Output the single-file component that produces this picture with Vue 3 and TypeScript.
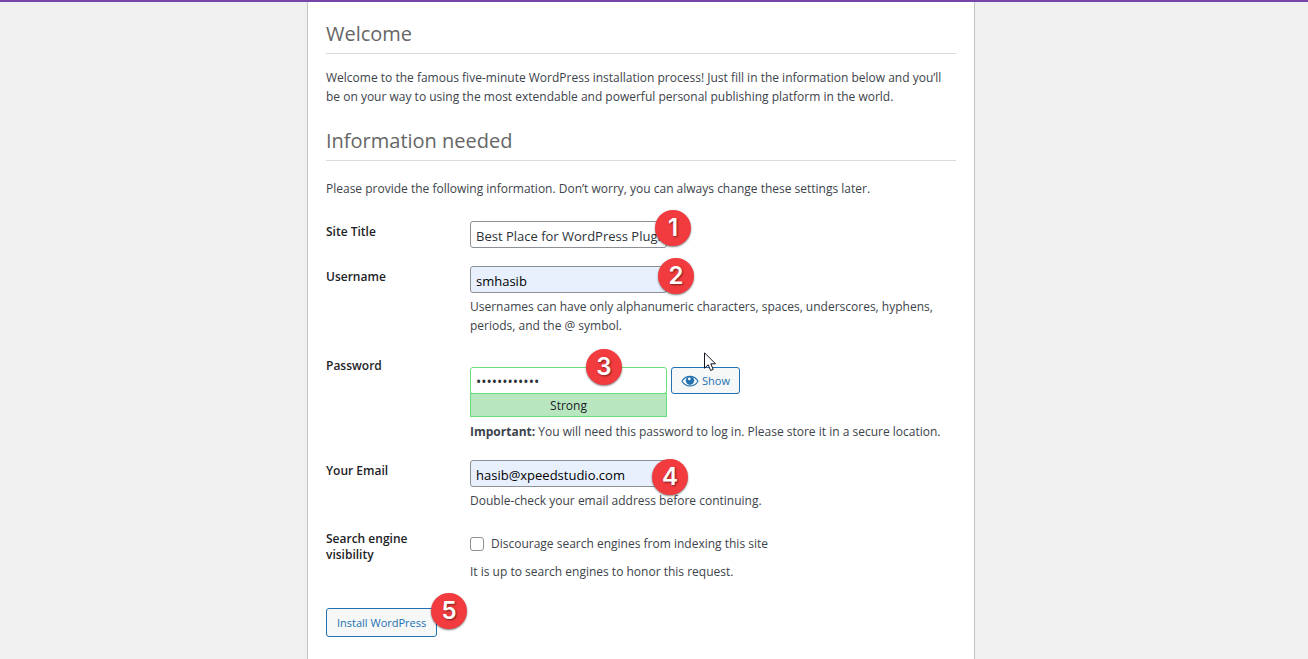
<script setup lang="ts">
import { ref } from 'vue'

const siteTitle = ref('Best Place for WordPress Plugins')
const username = ref('smhasib')
const password = ref('abcdefghijkl')
const email = ref('hasib@xpeedstudio.com')
const discourage = ref(false)
</script>

<template>
  <div class="page">
    <main class="card">
      <h1>Welcome</h1>
      <p class="intro">
        Welcome to the famous five-minute WordPress installation process! Just fill in the information below and you’ll
        be on your way to using the most extendable and powerful personal publishing platform in the world.
      </p>
      <h2>Information needed</h2>
      <p class="intro">
        Please provide the following information. Don’t worry, you can always change these settings later.
      </p>

      <form @submit.prevent>
        <div class="row title-row">
          <label class="name" for="site-title">Site Title</label>
          <div class="cell">
            <input id="site-title" v-model="siteTitle" class="field" type="text" />
            <span class="badge b1">1</span>
          </div>
        </div>

        <div class="row user-row">
          <label class="name" for="username">Username</label>
          <div class="cell">
            <input id="username" v-model="username" class="field filled" type="text" />
            <p class="hint">
              Usernames can have only alphanumeric characters, spaces, underscores, hyphens, periods, and the @ symbol.
            </p>
            <span class="badge b2">2</span>
          </div>
        </div>

        <div class="row pass-row">
          <label class="name" for="password">Password</label>
          <div class="cell pass-cell">
            <div class="pass-line">
              <div class="pass-box">
                <input id="password" v-model="password" class="field strong-field" type="password" />
                <div class="meter">Strong</div>
              </div>
              <button type="button" class="btn show">
                <svg class="eye" viewBox="0 0 18 12" aria-hidden="true">
                  <path
                    d="M1 6.200C2.800 3.200 5.600 1.400 9 1.400S15.200 3.200 17 6.200C15.200 9.200 12.400 10.900 9 10.900S2.800 9.200 1 6.200Z"
                    fill="none"
                    stroke="currentColor"
                    stroke-width="1.100"
                  />
                  <circle cx="9" cy="5.600" r="4.200" fill="currentColor" />
                  <circle cx="8.300" cy="3.900" r="1.400" fill="#f6f7f7" />
                </svg>
                Show
              </button>
            </div>
            <p class="hint"><strong>Important:</strong> You will need this password to log in. Please store it in a secure location.</p>
            <span class="badge b3">3</span>
            <svg class="cursor" viewBox="0 0 12 20" aria-hidden="true">
              <path
                d="M0.5 0.8V16.200L4.200 12.800L6.600 18.500L9.200 17.400L6.800 11.800H11.500Z"
                fill="#fff"
                stroke="#15151f"
                stroke-width="1"
              />
            </svg>
          </div>
        </div>

        <div class="row mail-row">
          <label class="name" for="email">Your Email</label>
          <div class="cell">
            <input id="email" v-model="email" class="field filled" type="email" />
            <p class="hint">Double-check your email address before continuing.</p>
            <span class="badge b4">4</span>
          </div>
        </div>

        <div class="row search-row">
          <span class="name two">Search engine visibility</span>
          <div class="cell">
            <label class="check" for="discourage">
              <input id="discourage" v-model="discourage" type="checkbox" />
              Discourage search engines from indexing this site
            </label>
            <p class="honor">It is up to search engines to honor this request.</p>
          </div>
        </div>

        <div class="submit">
          <button type="submit" class="btn install">Install WordPress</button>
          <span class="badge b5">5</span>
        </div>
      </form>
    </main>
  </div>
</template>

<style>
html,
body {
  background: #f0f0f0;
}
body {
  margin: 0;
}
</style>

<style scoped>
.page {
  box-sizing: border-box;
  display: flex;
  justify-content: center;
  min-height: 100vh;
  padding-right: 26px;
  border-top: 2px solid #7546a8;
  background: #f0f0f0;
  color: #3c434a;
  font: 12px/19px "Open Sans", "Noto Sans", sans-serif;
}
.card {
  box-sizing: border-box;
  width: 100%;
  max-width: 668px;
  padding: 16px 18px 22px;
  border: solid #c3c4c7;
  border-width: 0 1px;
  background: #fff;
}
h1,
h2 {
  margin: 0;
  padding-bottom: 4px;
  border-bottom: 1px solid #dadada;
  color: #666;
  font-size: 20px;
  line-height: 31px;
  font-weight: 400;
}
.intro {
  margin: 14px 0 19px;
}
h2 + .intro {
  margin: 18px 0 0;
}
.row {
  display: grid;
  grid-template-columns: 144px minmax(0, 1fr);
}
.name {
  color: #1d2327;
  font-weight: 600;
  line-height: 16px;
}
.two {
  width: 100px;
}
.cell {
  position: relative;
}
.field {
  box-sizing: border-box;
  display: block;
  width: 197px;
  height: 27px;
  margin: 0;
  padding: 2px 5px 0;
  border: 1px solid #8c8f94;
  border-radius: 3px;
  outline: none;
  background: #fff;
  color: #2c3338;
  font: 13px/20px "Open Sans", "Noto Sans", sans-serif;
}
.filled {
  background: #e8f0fe;
  color: #000;
}
.hint,
.honor {
  margin: 4px 0 0;
}
.title-row {
  margin-top: 23px;
}
.user-row {
  margin-top: 18px;
}
.title-row .name,
.user-row .name,
.mail-row .name {
  padding-top: 3px;
}
.pass-row {
  margin-top: 22px;
}
.pass-row .name {
  padding-top: 1px;
}
.pass-cell {
  padding-top: 10px;
}
.pass-line {
  display: flex;
  align-items: flex-start;
  gap: 4px;
}
.strong-field {
  border-color: #68de7c;
  font-size: 14px;
}
.meter {
  box-sizing: border-box;
  height: 24px;
  margin-top: -1px;
  border: 1px solid #68de7c;
  background: #b8e6bf;
  color: #1d2327;
  line-height: 23px;
  text-align: center;
}
.pass-cell .hint {
  margin-top: 5px;
}
.btn {
  box-sizing: border-box;
  display: inline-flex;
  align-items: center;
  justify-content: center;
  margin: 0;
  border: 1px solid #2271b1;
  border-radius: 3px;
  background: #f6f7f7;
  color: #2271b1;
  font: 11px/19px "Open Sans", "Noto Sans", sans-serif;
}
.show {
  height: 27px;
  padding: 0 9px;
  gap: 3px;
}
.eye {
  width: 18px;
  height: 12px;
}
.mail-row {
  margin-top: 19px;
}
.search-row {
  margin-top: 21px;
}
.check {
  display: flex;
  align-items: center;
  gap: 7px;
  margin-top: 3px;
}
.check input {
  box-sizing: border-box;
  width: 14px;
  height: 14px;
  margin: 0;
  border: 1px solid #8c8f94;
  border-radius: 3px;
  appearance: none;
  background: #fff;
}
.check input:checked {
  background: #2271b1;
}
.honor {
  margin-top: 9px;
}
.submit {
  position: relative;
  margin-top: 27px;
}
.install {
  height: 29px;
  padding: 0 10px;
}
.badge {
  position: absolute;
  width: 36px;
  height: 36px;
  border-radius: 50%;
  background: #f23b3e;
  box-shadow: 0 1px 2px rgba(0, 0, 0, 0.5);
  color: #fff;
  font: 600 24px/36px Inter, "Open Sans", sans-serif;
  text-align: center;
  text-shadow: 1px 1px 2px rgba(0, 0, 0, 0.5);
}
.b1 {
  left: 185px;
  top: -11px;
}
.b2 {
  left: 188px;
  top: -8px;
}
.b3 {
  left: 116px;
  top: -8px;
}
.b4 {
  left: 182px;
  top: -1px;
}
.b5 {
  left: 105px;
  top: -15px;
}
.cursor {
  position: absolute;
  left: 234px;
  top: -5px;
  width: 12px;
  height: 20px;
}
</style>
